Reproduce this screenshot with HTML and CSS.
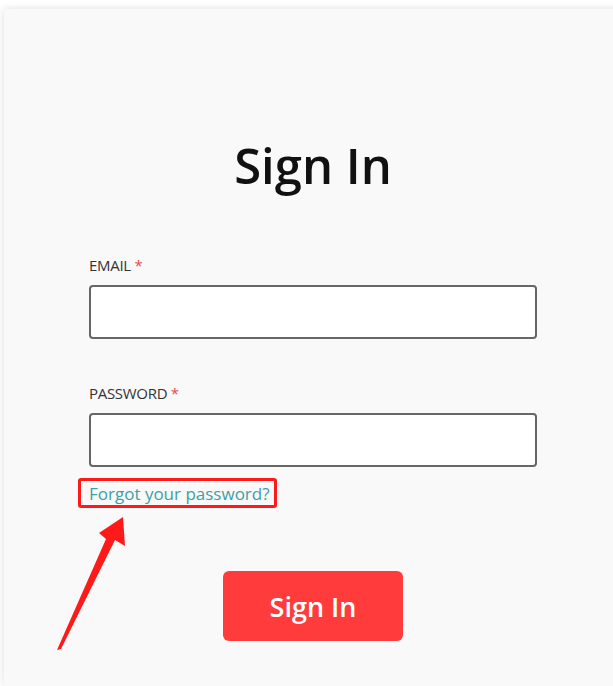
FILE: index.html
```html
<!DOCTYPE html>
<html lang="en">
<head>
  <meta charset="UTF-8" />
  <title>Sign In</title>
  <link rel="stylesheet" href="styles.css">
</head>
<body>
  <div class="card">
    <h1 class="title">Sign In</h1>

    <form class="form" onsubmit="return false">
      <label class="label" for="email">EMAIL <span class="req">*</span></label>
      <input class="field" id="email" type="email">

      <label class="label label-gap" for="password">PASSWORD <span class="req">*</span></label>
      <input class="field" id="password" type="password">

      <div class="forgot-row">
        <span class="highlight"><a class="forgot" href="#">Forgot your password?</a></span>
      </div>

      <div class="actions">
        <button class="submit-btn" type="submit">Sign In</button>
      </div>
    </form>
  </div>

  <!-- annotation arrow pointing at the link -->
  <svg class="arrow" width="613" height="686" viewBox="0 0 613 686">
    <polygon points="57,650 106,539 99,533 123,517 125,546 115,540 61,649" fill="#ff1a1a" />
  </svg>
</body>
</html>
```

FILE: styles.css
```css
html, body {
  margin: 0;
  padding: 0;
  overflow: hidden;
}

body {
  font-family: 'Open Sans', 'Noto Sans', sans-serif;
  background-color: #ffffff;
  color: #222;
  width: 613px;
  height: 686px;
}

.card {
  margin: 9px 0 0 4px;
  width: 618px;
  height: 677px;
  box-sizing: border-box;
  padding: 126px 85px 0;
  background-color: #f9f9f9;
  box-shadow: 0 0 8px rgba(0, 0, 0, 0.13);
}

.title {
  margin: 0;
  font-size: 49px;
  line-height: 60px;
  font-weight: 600;
  text-align: center;
  color: #111;
}

.form {
  display: flex;
  flex-direction: column;
  margin-top: 60px;
}

.label {
  font-size: 15px;
  line-height: 20px;
  color: #333;
  margin-bottom: 10px;
  letter-spacing: -0.3px;
}

.label-gap {
  margin-top: 44px;
}

.req {
  color: #e84a4a;
}

.field {
  height: 54px;
  box-sizing: border-box;
  border: 2px solid #666;
  border-radius: 4px;
  background: #fff;
  margin: 0;
}

.forgot-row {
  margin-top: 11px;
}

.highlight {
  display: inline-block;
  margin-left: -11px;
  padding: 2px 4px 0 8px;
  border: 3px solid #ff1a1a;
  border-radius: 3px;
}

.forgot {
  display: block;
  font-size: 17px;
  line-height: 22px;
  color: #3c9fa8;
  text-decoration: none;
}

.actions {
  display: flex;
  justify-content: center;
  margin-top: 63px;
}

.submit-btn {
  width: 180px;
  height: 70px;
  border: none;
  border-radius: 6px;
  background-color: #ff3b3b;
  color: #fff;
  font-family: 'Open Sans', 'Noto Sans', sans-serif;
  font-size: 27px;
  font-weight: 600;
  cursor: pointer;
}

.arrow {
  position: absolute;
  left: 0;
  top: 0;
  pointer-events: none;
}
```
